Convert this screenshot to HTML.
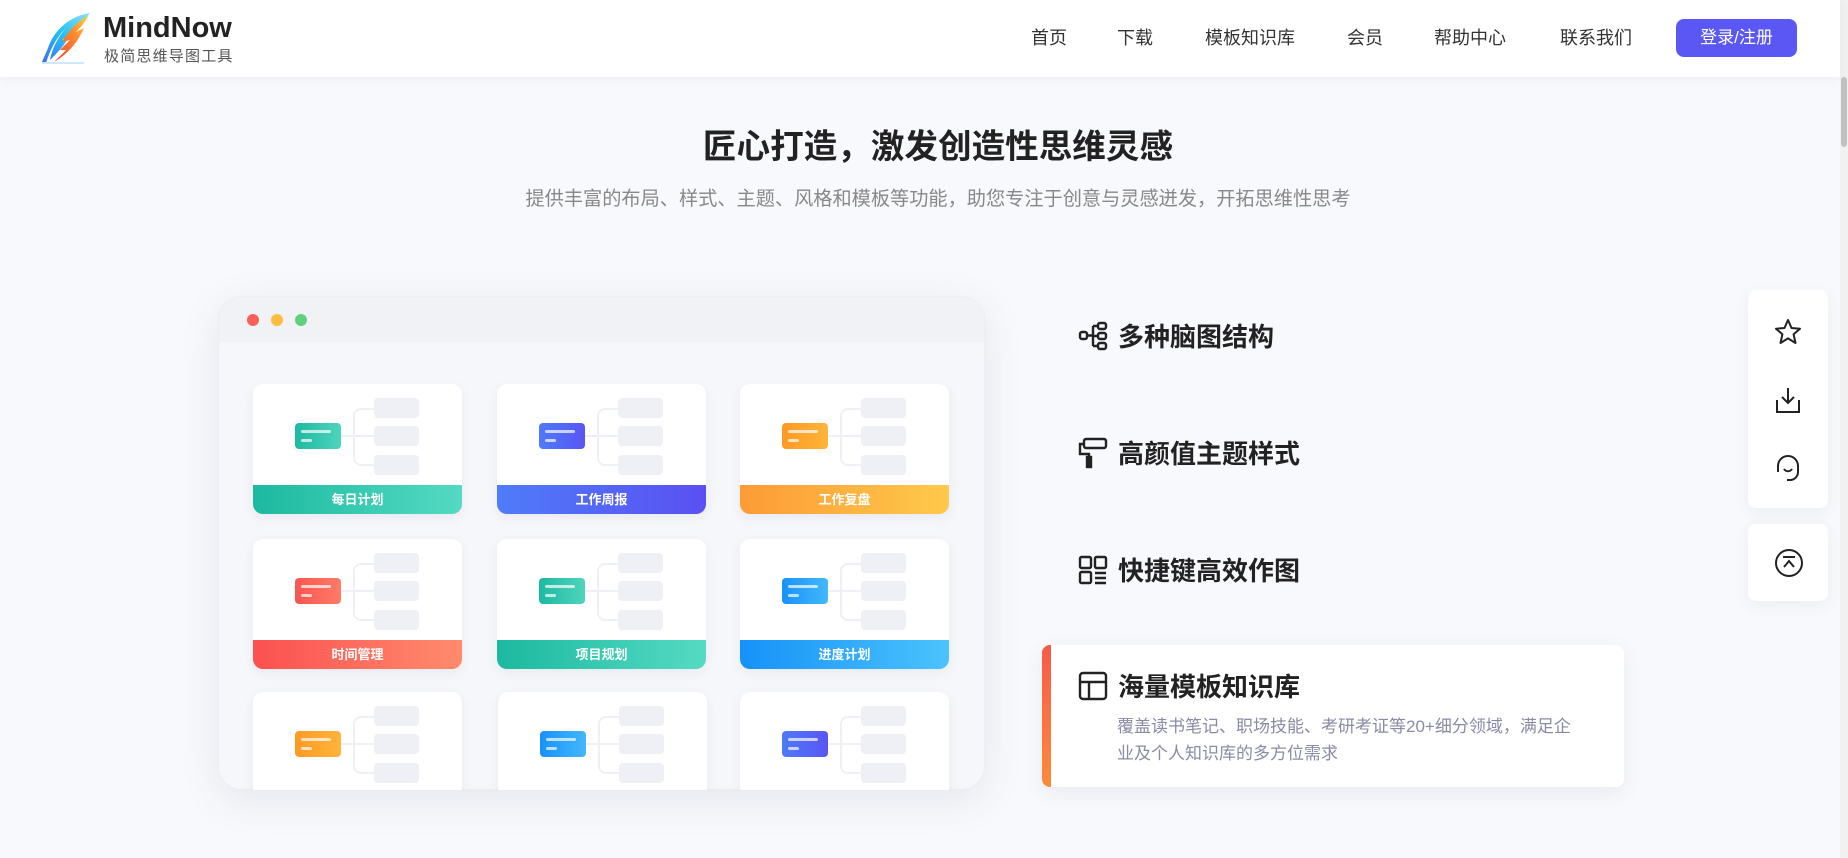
<!DOCTYPE html>
<html><head><meta charset="utf-8"><style>
*{margin:0;padding:0;box-sizing:border-box}
body{width:1848px;height:858px;overflow:hidden;background:#f8f9fc;font-family:"Liberation Sans","Noto Sans CJK SC",sans-serif;position:relative;color:#222}
.hdr{position:absolute;left:0;top:0;width:1840px;height:77px;background:#fff;box-shadow:0 2px 12px rgba(0,0,0,.05);z-index:2}
.sb{position:absolute;right:0;top:0;width:8px;height:858px;background:#f1f1f1}
.sb i{position:absolute;left:1px;top:77px;width:6px;height:70px;background:#c1c1c1;border-radius:3px}
.nav{position:absolute;top:24px;font-size:18px;color:#333;transform:translateX(-50%);white-space:nowrap}
.btn{position:absolute;left:1676px;top:19px;width:121px;height:38px;background:#5b57f5;color:#fff;border-radius:8px;font-size:17px;text-align:center;line-height:38px}
h1{position:absolute;left:0;width:1876px;top:119px;text-align:center;font-size:33.6px;font-weight:bold;color:#222}
.sub{position:absolute;left:0;width:1876px;top:183px;text-align:center;font-size:19.2px;color:#888}
.win{position:absolute;left:218px;top:296px;width:767px;height:494px;border-radius:24px;background:#f6f7fa;box-shadow:0 10px 40px rgba(60,70,110,.10);overflow:hidden;border:1px solid #eceef3}
.tb{height:45px;background:#f1f2f5}
.dot{position:absolute;top:17px;width:12px;height:12px;border-radius:50%}
.card{position:absolute;width:209px;height:130px;background:#fff;border-radius:10px;box-shadow:0 4px 12px rgba(60,70,110,.07);overflow:hidden}
.card .c{position:absolute;left:42px;top:39px;width:46px;height:26px;border-radius:4px}
.card .c:before{content:"";position:absolute;left:6px;top:7px;width:30px;height:3px;background:rgba(255,255,255,.7);border-radius:2px}
.card .c:after{content:"";position:absolute;left:6px;top:16px;width:11px;height:3px;background:rgba(255,255,255,.7);border-radius:2px}
.card .n{position:absolute;left:121px;width:45px;height:20px;background:#eef0f6;border-radius:4px}
.card .ln{position:absolute;left:100px;top:24px;width:22px;height:58px;border:2px solid #eef0f5;border-right:none;border-radius:8px 0 0 8px}
.card .h{position:absolute;left:88px;top:51px;width:34px;height:2px;background:#eef0f5}
.card .lb{position:absolute;left:0;bottom:0;width:100%;height:29px;color:#fff;font-size:13px;font-weight:bold;text-align:center;line-height:29px}
.ft{position:absolute;left:1078px;font-size:26px;font-weight:bold;color:#222;display:flex;align-items:center}
.ft svg{margin-right:10px}
.act{position:absolute;left:1042px;top:645px;width:582px;height:142px;background:#fff;border-radius:8px;box-shadow:0 6px 20px rgba(60,70,110,.08);overflow:hidden}
.act .bar{position:absolute;left:0;top:0;width:9px;height:100%;background:linear-gradient(#f65a4a,#fb8c3c)}
.desc{position:absolute;left:75px;top:68px;width:460px;font-size:17px;line-height:27px;color:#8a8aa6}
.fl{position:absolute;left:1748px;width:80px;background:#fff;border-radius:8px;box-shadow:0 4px 16px rgba(60,70,110,.07)}
.fl svg{position:absolute;left:26px}
</style></head><body>
<div class="hdr">
<svg style="position:absolute;left:40px;top:12px" width="54" height="53" viewBox="0 0 54 53"><defs><linearGradient id="g1" x1="0" y1="1" x2="1" y2="0"><stop offset="0" stop-color="#3b6cf6"/><stop offset=".5" stop-color="#26c2f0"/><stop offset="1" stop-color="#8ee0ff"/></linearGradient><linearGradient id="g2" x1="0" y1="1" x2="1" y2="0"><stop offset="0" stop-color="#f5433c"/><stop offset=".6" stop-color="#fb8a2e"/><stop offset="1" stop-color="#ffd23b"/></linearGradient></defs><path d="M50 1C30 4 14 18 8 36L2 50 6 51C10 38 16 26 26 16 16 28 12 38 10 48 18 40 24 34 28 26L22 28C32 22 42 12 50 1Z" fill="url(#g1)"/><path d="M48 4C36 10 28 20 22 30L30 28 20 38 26 38 14 50C28 42 38 30 44 16L36 20C42 14 46 9 48 4Z" fill="url(#g2)"/><path d="M2 51H44" stroke="#cfe6ff" stroke-width="2"/></svg>
<div style="position:absolute;left:103px;top:12px;font-size:29px;font-weight:bold;color:#222">MindNow</div>
<div style="position:absolute;left:104px;top:45px;font-size:15px;color:#555;letter-spacing:1.2px">极简思维导图工具</div>
<div class="nav" style="left:1049px">首页</div>
<div class="nav" style="left:1135px">下载</div>
<div class="nav" style="left:1250px">模板知识库</div>
<div class="nav" style="left:1365px">会员</div>
<div class="nav" style="left:1470px">帮助中心</div>
<div class="nav" style="left:1596px">联系我们</div>
<div class="btn">登录/注册</div>
</div>
<div class="sb"><i></i></div>
<h1>匠心打造，激发创造性思维灵感</h1>
<div class="sub">提供丰富的布局、样式、主题、风格和模板等功能，助您专注于创意与灵感迸发，开拓思维性思考</div>

<div class="win"><div class="tb"></div>
<div class="dot" style="left:28px;background:#fb5f57"></div><div class="dot" style="left:52px;background:#fdbd3f"></div><div class="dot" style="left:76px;background:#5fd07d"></div>
</div>
<div style="position:absolute;left:218px;top:296px;width:767px;height:494px;border-radius:24px;overflow:hidden;pointer-events:none">
<div style="position:absolute;left:0;top:0;width:767px;height:494px">
<div class="card" style="left:35px;top:88px"><div class="ln"></div><div class="h"></div><div class="c" style="background:linear-gradient(90deg,#1cb9a0,#4fd4bd)"></div><div class="n" style="top:14px"></div><div class="n" style="top:42px"></div><div class="n" style="top:71px"></div><div class="lb" style="background:linear-gradient(90deg,#1cb9a0,#55dac3)">每日计划</div></div>
<div class="card" style="left:279px;top:88px"><div class="ln"></div><div class="h"></div><div class="c" style="background:linear-gradient(90deg,#4d7af8,#5a55f3)"></div><div class="n" style="top:14px"></div><div class="n" style="top:42px"></div><div class="n" style="top:71px"></div><div class="lb" style="background:linear-gradient(90deg,#4f7cf9,#5a50f2)">工作周报</div></div>
<div class="card" style="left:522px;top:88px"><div class="ln"></div><div class="h"></div><div class="c" style="background:linear-gradient(90deg,#fc9a24,#ffb43a)"></div><div class="n" style="top:14px"></div><div class="n" style="top:42px"></div><div class="n" style="top:71px"></div><div class="lb" style="background:linear-gradient(90deg,#fd9b36,#ffc94b)">工作复盘</div></div>
<div class="card" style="left:35px;top:243px"><div class="ln"></div><div class="h"></div><div class="c" style="background:linear-gradient(90deg,#fb5452,#ff7c66)"></div><div class="n" style="top:14px"></div><div class="n" style="top:42px"></div><div class="n" style="top:71px"></div><div class="lb" style="background:linear-gradient(90deg,#fb5050,#ff8b6c)">时间管理</div></div>
<div class="card" style="left:279px;top:243px"><div class="ln"></div><div class="h"></div><div class="c" style="background:linear-gradient(90deg,#1cb9a0,#4fd4bd)"></div><div class="n" style="top:14px"></div><div class="n" style="top:42px"></div><div class="n" style="top:71px"></div><div class="lb" style="background:linear-gradient(90deg,#1cb9a0,#55dac3)">项目规划</div></div>
<div class="card" style="left:522px;top:243px"><div class="ln"></div><div class="h"></div><div class="c" style="background:linear-gradient(90deg,#1892f8,#43b8fb)"></div><div class="n" style="top:14px"></div><div class="n" style="top:42px"></div><div class="n" style="top:71px"></div><div class="lb" style="background:linear-gradient(90deg,#1692f8,#4bc3fc)">进度计划</div></div>
<div class="card" style="left:35px;top:396px"><div class="ln"></div><div class="h"></div><div class="c" style="background:linear-gradient(90deg,#fc9a24,#ffb43a)"></div><div class="n" style="top:14px"></div><div class="n" style="top:42px"></div><div class="n" style="top:71px"></div></div>
<div class="card" style="left:280px;top:396px"><div class="ln"></div><div class="h"></div><div class="c" style="background:linear-gradient(90deg,#1892f8,#43b8fb)"></div><div class="n" style="top:14px"></div><div class="n" style="top:42px"></div><div class="n" style="top:71px"></div></div>
<div class="card" style="left:522px;top:396px"><div class="ln"></div><div class="h"></div><div class="c" style="background:linear-gradient(90deg,#4d7af8,#5a55f3)"></div><div class="n" style="top:14px"></div><div class="n" style="top:42px"></div><div class="n" style="top:71px"></div></div>
</div></div>

<div class="ft" style="top:317px"><svg width="30" height="30" viewBox="0 0 30 30" fill="none" stroke="#222" stroke-width="2.4"><rect x="2" y="11" width="7" height="7" rx="2"/><rect x="20" y="2" width="8" height="6" rx="2"/><rect x="20" y="12" width="8" height="6" rx="2"/><rect x="20" y="22" width="8" height="6" rx="2"/><path d="M9 14.5H15M15 5V25M15 5H20M15 15H20M15 25H20"/></svg>多种脑图结构</div>
<div class="ft" style="top:434px"><svg width="30" height="32" viewBox="0 0 30 32" fill="none" stroke="#222" stroke-width="2.4"><rect x="6" y="2" width="22" height="9" rx="2"/><path d="M6 7H2V17H11V30"/><rect x="9" y="20" width="4" height="10"/></svg>高颜值主题样式</div>
<div class="ft" style="top:551px"><svg width="30" height="30" viewBox="0 0 30 30" fill="none" stroke="#222" stroke-width="2.4"><rect x="2" y="2" width="11" height="11" rx="1.5"/><rect x="2" y="17" width="11" height="11" rx="1.5"/><rect x="17" y="2" width="11" height="11" rx="1.5"/><path d="M17 18H28M17 23H28M17 28H28"/></svg>快捷键高效作图</div>

<div class="act"><div class="bar"></div>
<div class="ft" style="left:36px;top:22px;position:absolute"><svg width="30" height="30" viewBox="0 0 30 30" fill="none" stroke="#222" stroke-width="2.4"><rect x="2" y="2" width="26" height="26" rx="3"/><path d="M2 11H28M11 11V28"/></svg>海量模板知识库</div>
<div class="desc">覆盖读书笔记、职场技能、考研考证等20+细分领域，满足企业及个人知识库的多方位需求</div>
</div>

<div class="fl" style="top:290px;height:218px">
<svg style="top:28px" width="28" height="28" viewBox="0 0 28 28" fill="none" stroke="#222" stroke-width="2" stroke-linejoin="round"><path d="M14 2L17.5 10 26 10.7 19.6 16.3 21.5 25 14 20.4 6.5 25 8.4 16.3 2 10.7 10.5 10Z"/></svg>
<svg style="top:96px" width="28" height="28" viewBox="0 0 28 28" fill="none" stroke="#222" stroke-width="2"><path d="M14 2V17M8 11L14 17 20 11M3 14V26H25V14"/></svg>
<svg style="top:163px" width="28" height="30" viewBox="0 0 28 30" fill="none" stroke="#222" stroke-width="2"><path d="M4 18V13A10 10 0 0 1 24 13V19A8 8 0 0 1 16 27H13"/><path d="M10 16C12 19 16 19 18 16"/><path d="M4 13V19"/></svg>
</div>
<div class="fl" style="top:524px;height:77px">
<svg style="top:24px" width="30" height="30" viewBox="0 0 30 30" fill="none" stroke="#222" stroke-width="2"><circle cx="15" cy="15" r="13"/><path d="M9 9H21M10 19L15 13 20 19"/></svg>
</div>
</body></html>
